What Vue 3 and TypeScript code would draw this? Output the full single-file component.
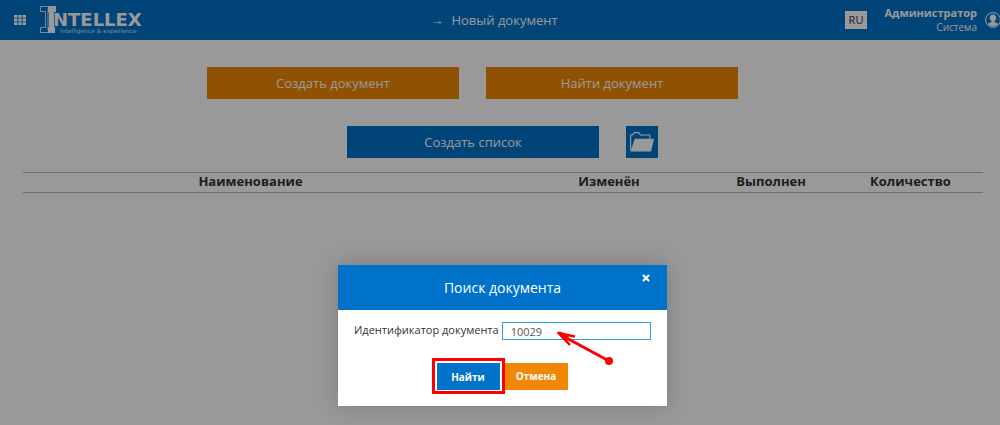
<script setup lang="ts">
import { ref } from 'vue'

const documentId = ref('10029')
const columns: { title: string; kind: string }[] = [
  { title: 'Наименование', kind: 'name' },
  { title: '', kind: 'spacer' },
  { title: 'Изменён', kind: 'changed' },
  { title: 'Выполнен', kind: 'done' },
  { title: 'Количество', kind: 'count' },
]
</script>

<template>
  <div class="page">
    <header class="topbar">
      <button class="menu" aria-label="Меню">
        <svg width="12" height="10" viewBox="0 0 12 10" fill="#fff">
          <path d="M0 0h3.4v2.8H0zM4.3 0h3.4v2.800h-3.400zM8.600 0H12v2.800H8.600zM0 3.600h3.400v2.800H0zM4.300 3.600h3.400v2.800h-3.400zM8.600 3.600H12v2.800H8.600zM0 7.200h3.400V10H0zM4.300 7.200h3.400V10h-3.400zM8.600 7.200H12V10H8.600z" />
        </svg>
      </button>
      <a class="logo" href="#" aria-label="Intellex">
        <svg width="103" height="28" viewBox="0 0 103 28">
          <path d="M8 0h8v6h-2v15h1v6H8v-6h1V6H8z" fill="#fff" />
          <path d="M8 .5H.5v5h5v16h-5v5H8M8 2.500v22" fill="none" stroke="#fff" stroke-opacity=".8" />
          <text class="brand" x="13" y="20">NTELLEX</text>
          <text class="motto" x="20" y="27">intelligence &amp; experience</text>
        </svg>
      </a>
      <div class="crumb"><span class="arrow">→</span><span>Новый документ</span></div>
      <button class="lang">RU</button>
      <div class="user"><strong>Администратор</strong><span>Система</span></div>
      <svg class="avatar" width="16" height="16" viewBox="0 0 16 16">
        <circle cx="8" cy="8" r="7.4" fill="none" stroke="#fff" />
        <path d="M8 2.500c-2 0-3.200 1.300-3.200 3.200 0 1.500.8 2.700 1.700 3.300v1.100L2.600 11.800C4 13.600 5.900 14.500 8 14.500s4-.9 5.400-2.700L9.500 10.100V9c.9-.6 1.700-1.800 1.700-3.300 0-1.900-1.200-3.200-3.200-3.200z" fill="#fff" />
      </svg>
    </header>

    <main>
      <div class="actions documents">
        <button class="wide orange">Создать документ</button>
        <button class="wide orange">Найти документ</button>
      </div>
      <div class="actions lists">
        <button class="wide blue">Создать список</button>
        <button class="folder blue" aria-label="Открыть список">
          <svg width="24" height="20" viewBox="0 0 24 20">
            <path d="M.6 18.500V3h1.900L4.500.7h4L10.500 3h9.300v4" fill="none" stroke="#fff" stroke-width="1.200" />
            <path d="M4.700 6.700H24L21 19.500H.5z" fill="#fff" />
          </svg>
        </button>
      </div>
      <table>
        <thead>
          <tr><th v-for="c in columns" :key="c.kind" :class="c.kind">{{ c.title }}</th></tr>
        </thead>
      </table>
    </main>

    <div class="backdrop">
      <form class="dialog" role="dialog" aria-labelledby="dialog-title" @submit.prevent>
        <div class="dialog-head">
          <h2 id="dialog-title">Поиск документа</h2>
          <button type="button" class="close" aria-label="Закрыть">
            <svg width="8" height="8" viewBox="0 0 8 8"><path d="M1 1l6 6M7 1L1 7" stroke="#fff" stroke-width="2" /></svg>
          </button>
        </div>
        <div class="field">
          <label for="document-id">Идентификатор документа</label>
          <input id="document-id" v-model="documentId" type="text" />
        </div>
        <div class="buttons">
          <span class="marked"><button class="small blue" type="submit">Найти</button></span>
          <button class="small orange" type="button">Отмена</button>
        </div>
        <svg class="pointer" width="58" height="36" viewBox="0 0 58 36">
          <path d="M4 5L52 31" stroke="#f00" stroke-width="3" />
          <path d="M18 6.500L2 3.500L13 15" fill="none" stroke="#f00" stroke-width="2.500" />
          <path d="M0 2.500L3 1.500L12 5L10 12z" fill="#f00" />
          <circle cx="52" cy="31" r="4" fill="#f00" />
        </svg>
      </form>
    </div>
  </div>
</template>

<style>
body {
  margin: 0;
  overflow: hidden;
}
</style>

<style scoped>
.page {
  position: relative;
  min-height: 100vh;
  background: #fff;
  color: #333;
  font: 13px "Open Sans", "Noto Sans", sans-serif;
}
button {
  border: 0;
  padding: 0;
  color: #fff;
  font: inherit;
}
svg {
  display: block;
}
.topbar {
  display: flex;
  align-items: center;
  height: 40px;
  background: #0072c9;
  color: #fff;
}
.menu {
  margin: 0 14px;
  background: none;
}
.brand {
  font: bold 18px "DejaVu Sans", sans-serif;
  fill: #fff;
}
.motto {
  font: 6px "DejaVu Sans", sans-serif;
  fill: #fff;
  fill-opacity: 0.8;
}
.crumb {
  display: flex;
  flex: 1;
  justify-content: center;
  align-items: center;
  gap: 8px;
}
.arrow {
  font-family: "Liberation Sans", sans-serif;
}
.lang {
  width: 22px;
  height: 18px;
  background: #fff;
  color: #333;
  font-size: 11px;
  line-height: 18px;
}
.user {
  display: flex;
  flex-direction: column;
  align-items: flex-end;
  width: 110px;
  font-size: 11px;
  line-height: 14px;
}
.user span {
  font-size: 10px;
}
.avatar {
  flex: none;
  margin: 0 -1px 0 8px;
}
.actions {
  display: flex;
  justify-content: center;
  gap: 27px;
}
.documents {
  padding: 27px 55px 27px 0;
}
.lists {
  padding: 0 0 14px 5px;
}
.wide {
  width: 252px;
  height: 32px;
}
.orange {
  background: #f28705;
}
.blue {
  background: #0072c9;
}
.folder {
  display: grid;
  place-items: center;
  width: 32px;
  height: 32px;
}
table {
  width: calc(100% - 40px);
  margin-left: 23px;
  table-layout: fixed;
  border-collapse: collapse;
}
th {
  height: 19px;
  padding: 0;
  border: solid #bbb;
  border-width: 1px 0;
  line-height: 17px;
  vertical-align: top;
}
.spacer {
  width: 36px;
}
.changed {
  width: 190px;
}
.done {
  width: 134px;
}
.count {
  width: 145px;
}
.backdrop {
  position: absolute;
  inset: 0;
  display: flex;
  justify-content: center;
  align-items: flex-end;
  padding: 0 0 19px 5px;
  background: rgba(0, 0, 0, 0.4);
}
.dialog {
  position: relative;
  width: 329px;
  background: #fff;
  box-shadow: 0 0 20px rgba(0, 0, 0, 0.2);
}
.dialog-head {
  position: relative;
  background: #0072c9;
  color: #fff;
  text-align: center;
}
h2 {
  margin: 0;
  font-size: 14px;
  font-weight: normal;
  line-height: 45px;
}
.close {
  position: absolute;
  top: 9px;
  right: 17px;
  background: none;
}
.field {
  display: flex;
  align-items: flex-start;
  gap: 3px;
  padding: 12px 16px 0;
  font-size: 11px;
}
label {
  line-height: 16px;
}
input {
  flex: 1;
  min-width: 0;
  height: 18px;
  box-sizing: border-box;
  padding: 1px 8px 0;
  border: 1px solid #2f9ff8;
  outline: 0;
  color: #555;
  font: inherit;
}
.buttons {
  display: flex;
  justify-content: center;
  align-items: center;
  padding: 18px 6px 12px 0;
}
.marked {
  padding: 2px 2px 1px;
  border: 3px solid #f00;
}
.small {
  display: block;
  width: 63px;
  height: 27px;
  font-size: 10px;
  font-weight: bold;
}
.pointer {
  position: absolute;
  top: 65px;
  left: 219px;
}
</style>
